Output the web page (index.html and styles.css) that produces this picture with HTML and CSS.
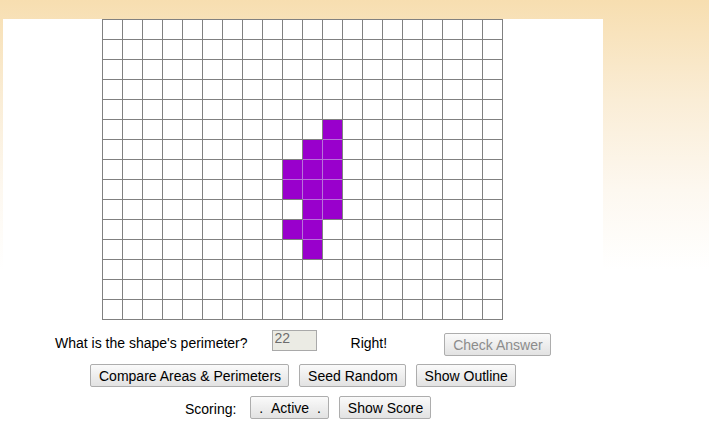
FILE: index.html
```html
<!DOCTYPE html>
<html lang="en">
<head>
<meta charset="utf-8">
<title>Area and Perimeter</title>
<link rel="stylesheet" href="styles.css">
</head>
<body>
<div class="page">
  <div class="panel">
    <div class="board">
      <span></span><span></span><span></span><span></span><span></span><span></span><span></span><span></span><span></span><span></span><span></span><span></span><span></span><span></span><span></span><span></span><span></span><span></span><span></span><span></span>
      <span></span><span></span><span></span><span></span><span></span><span></span><span></span><span></span><span></span><span></span><span></span><span></span><span></span><span></span><span></span><span></span><span></span><span></span><span></span><span></span>
      <span></span><span></span><span></span><span></span><span></span><span></span><span></span><span></span><span></span><span></span><span></span><span></span><span></span><span></span><span></span><span></span><span></span><span></span><span></span><span></span>
      <span></span><span></span><span></span><span></span><span></span><span></span><span></span><span></span><span></span><span></span><span></span><span></span><span></span><span></span><span></span><span></span><span></span><span></span><span></span><span></span>
      <span></span><span></span><span></span><span></span><span></span><span></span><span></span><span></span><span></span><span></span><span></span><span></span><span></span><span></span><span></span><span></span><span></span><span></span><span></span><span></span>
      <span></span><span></span><span></span><span></span><span></span><span></span><span></span><span></span><span></span><span></span><span></span><span class="p b"></span><span></span><span></span><span></span><span></span><span></span><span></span><span></span><span></span>
      <span></span><span></span><span></span><span></span><span></span><span></span><span></span><span></span><span></span><span></span><span class="p rb"></span><span class="p b"></span><span></span><span></span><span></span><span></span><span></span><span></span><span></span><span></span>
      <span></span><span></span><span></span><span></span><span></span><span></span><span></span><span></span><span></span><span class="p rb"></span><span class="p rb"></span><span class="p b"></span><span></span><span></span><span></span><span></span><span></span><span></span><span></span><span></span>
      <span></span><span></span><span></span><span></span><span></span><span></span><span></span><span></span><span></span><span class="p r"></span><span class="p rb"></span><span class="p b"></span><span></span><span></span><span></span><span></span><span></span><span></span><span></span><span></span>
      <span></span><span></span><span></span><span></span><span></span><span></span><span></span><span></span><span></span><span></span><span class="p rb"></span><span class="p"></span><span></span><span></span><span></span><span></span><span></span><span></span><span></span><span></span>
      <span></span><span></span><span></span><span></span><span></span><span></span><span></span><span></span><span></span><span class="p r"></span><span class="p b"></span><span></span><span></span><span></span><span></span><span></span><span></span><span></span><span></span><span></span>
      <span></span><span></span><span></span><span></span><span></span><span></span><span></span><span></span><span></span><span></span><span class="p"></span><span></span><span></span><span></span><span></span><span></span><span></span><span></span><span></span><span></span>
      <span></span><span></span><span></span><span></span><span></span><span></span><span></span><span></span><span></span><span></span><span></span><span></span><span></span><span></span><span></span><span></span><span></span><span></span><span></span><span></span>
      <span></span><span></span><span></span><span></span><span></span><span></span><span></span><span></span><span></span><span></span><span></span><span></span><span></span><span></span><span></span><span></span><span></span><span></span><span></span><span></span>
      <span></span><span></span><span></span><span></span><span></span><span></span><span></span><span></span><span></span><span></span><span></span><span></span><span></span><span></span><span></span><span></span><span></span><span></span><span></span><span></span>
    </div>

    <div class="row row-question">
      <span class="label">What is the shape's perimeter?</span>
      <input class="answer" type="text" value="22" disabled>
      <span class="label result">Right!</span>
      <button class="btn check" disabled>Check Answer</button>
    </div>

    <div class="row row-actions">
      <button class="btn">Compare Areas &amp; Perimeters</button>
      <button class="btn">Seed Random</button>
      <button class="btn">Show Outline</button>
    </div>

    <div class="row row-scoring">
      <span class="label scoring">Scoring:</span>
      <button class="btn">. &nbsp;Active&nbsp; .</button>
      <button class="btn">Show Score</button>
    </div>
  </div>
</div>
</body>
</html>
```
FILE: styles.css
```css
html {
  margin: 0;
  padding: 0;
  min-height: 100%;
  background-color: #ffffff;
  background-image: linear-gradient(#f7deb0 0, #faedd6 100px, #fdf8f0 190px, #ffffff 270px);
  background-repeat: no-repeat;
  background-size: 100% 423px;
}

body {
  margin: 0;
  padding: 0;
  font-family: "Liberation Sans", Arial, sans-serif;
  font-size: 14px;
  color: #000;
}

.page {
  padding: 19px 0 0 3px;
}

.panel {
  width: 600px;
  min-height: 404px;
  background: #ffffff;
}

.board {
  display: grid;
  grid-template-columns: repeat(20, 19px);
  grid-auto-rows: 19px;
  gap: 1px;
  padding: 1px;
  width: max-content;
  margin-left: 99px;
  background: #808080;
}

.board span {
  background: #ffffff;
}

.board .p {
  background: #9900cc;
}

.board .r {
  box-shadow: 1px 0 0 #b873d9;
}

.board .b {
  box-shadow: 0 1px 0 #b873d9;
}

.board .rb {
  box-shadow: 1px 0 0 #b873d9, 0 1px 0 #b873d9, 1px 1px 0 #b873d9;
}

.row {
  display: flex;
  align-items: flex-start;
}

.label {
  line-height: 16px;
  margin-top: 5px;
  white-space: nowrap;
}

.row-question {
  margin-top: 10px;
  padding-left: 52px;
}

.answer {
  width: 45px;
  height: 21px;
  box-sizing: border-box;
  margin: 0 0 0 24px;
  padding: 0 2px 6px;
  border: 1px solid #a9a9a9;
  background: #ebebe4;
  color: #6d6d6d;
  font: 14px "Liberation Sans", Arial, sans-serif;
}

.result {
  margin-left: 34px;
}

.check {
  margin-top: 3px;
  margin-left: 57px;
}

.btn {
  height: 23px;
  box-sizing: border-box;
  padding: 0 7px 0 8px;
  border: 1px solid #adadad;
  border-radius: 2px;
  background: linear-gradient(#fafafa, #e2e2e2);
  font: 14px "Liberation Sans", Arial, sans-serif;
  color: #000;
  white-space: nowrap;
}

.btn:disabled {
  color: #8c8c8c;
}

.row-actions {
  margin-top: 8px;
  padding-left: 87px;
  gap: 10px;
}

.row-scoring {
  margin-top: 9px;
  padding-left: 182px;
  gap: 10px;
}

.scoring {
  margin-right: 4px;
}
```
